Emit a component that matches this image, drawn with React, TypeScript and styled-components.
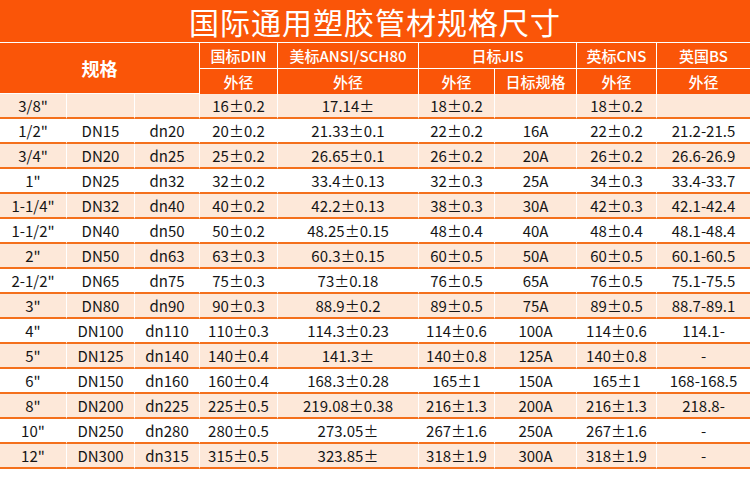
import styled, { createGlobalStyle } from 'styled-components';

const ORANGE = '#fa5508';
const LINE = '#f4701c';
const PEACH = '#fde8d9';

const GlobalStyle = createGlobalStyle`
  * {
    box-sizing: border-box;
  }
  body {
    margin: 0;
    background: #fff;
    font-family: "Noto Sans CJK SC", "Noto Sans", sans-serif;
  }
`;

const Page = styled.div`
  width: 750px;
  height: 482px;
  background: #fff;
  overflow: hidden;
`;

const Title = styled.h1`
  margin: 0;
  height: 43px;
  border-bottom: 1px solid #fff;
  background: ${ORANGE};
  color: #fff;
  font-size: 30px;
  font-weight: 400;
  line-height: 42px;
  letter-spacing: 1px;
  text-align: center;
  white-space: nowrap;
`;

const Table = styled.table`
  width: 750px;
  border-collapse: separate;
  border-spacing: 0;
  table-layout: fixed;
`;

const HeadCell = styled.th<{ $big?: boolean; $last?: boolean }>`
  height: ${(p) => (p.$big ? 51 : 26)}px;
  padding: 0;
  background: ${ORANGE};
  color: #fff;
  font-size: ${(p) => (p.$big ? 18 : 15)}px;
  font-weight: ${(p) => (p.$big ? 700 : 500)};
  text-align: center;
  vertical-align: middle;
  white-space: nowrap;
  border-right: ${(p) => (p.$last ? 'none' : '1px solid #fff')};
  border-bottom: 1px solid #fff;
`;

const SubHeadCell = styled(HeadCell)`
  height: 25px;
  border-bottom: none;
`;

const Row = styled.tr<{ $shaded: boolean }>`
  background: ${(p) => (p.$shaded ? PEACH : '#fff')};
`;

const Cell = styled.td<{ $last?: boolean }>`
  height: 25px;
  padding: 0;
  color: #151515;
  font-size: 15px;
  line-height: 22px;
  text-align: center;
  vertical-align: middle;
  white-space: nowrap;
  border-right: ${(p) => (p.$last ? 'none' : '1px solid #fff')};
  border-bottom: 2px solid ${LINE};
`;

const widths = [67, 68, 65, 78, 141, 76, 82, 80, 93];

const rows: string[][] = [
  ['3/8"', '', '', '16±0.2', '17.14±', '18±0.2', '', '18±0.2', ''],
  ['1/2"', 'DN15', 'dn20', '20±0.2', '21.33±0.1', '22±0.2', '16A', '22±0.2', '21.2-21.5'],
  ['3/4"', 'DN20', 'dn25', '25±0.2', '26.65±0.1', '26±0.2', '20A', '26±0.2', '26.6-26.9'],
  ['1"', 'DN25', 'dn32', '32±0.2', '33.4±0.13', '32±0.3', '25A', '34±0.3', '33.4-33.7'],
  ['1-1/4"', 'DN32', 'dn40', '40±0.2', '42.2±0.13', '38±0.3', '30A', '42±0.3', '42.1-42.4'],
  ['1-1/2"', 'DN40', 'dn50', '50±0.2', '48.25±0.15', '48±0.4', '40A', '48±0.4', '48.1-48.4'],
  ['2"', 'DN50', 'dn63', '63±0.3', '60.3±0.15', '60±0.5', '50A', '60±0.5', '60.1-60.5'],
  ['2-1/2"', 'DN65', 'dn75', '75±0.3', '73±0.18', '76±0.5', '65A', '76±0.5', '75.1-75.5'],
  ['3"', 'DN80', 'dn90', '90±0.3', '88.9±0.2', '89±0.5', '75A', '89±0.5', '88.7-89.1'],
  ['4"', 'DN100', 'dn110', '110±0.3', '114.3±0.23', '114±0.6', '100A', '114±0.6', '114.1-'],
  ['5"', 'DN125', 'dn140', '140±0.4', '141.3±', '140±0.8', '125A', '140±0.8', '-'],
  ['6"', 'DN150', 'dn160', '160±0.4', '168.3±0.28', '165±1', '150A', '165±1', '168-168.5'],
  ['8"', 'DN200', 'dn225', '225±0.5', '219.08±0.38', '216±1.3', '200A', '216±1.3', '218.8-'],
  ['10"', 'DN250', 'dn280', '280±0.5', '273.05±', '267±1.6', '250A', '267±1.6', '-'],
  ['12"', 'DN300', 'dn315', '315±0.5', '323.85±', '318±1.9', '300A', '318±1.9', '-'],
];

const App: React.FC = () => {
  return (
    <Page>
      <GlobalStyle />
      <Title>国际通用塑胶管材规格尺寸</Title>
      <Table>
        <colgroup>
          {widths.map((w, i) => (
            <col key={i} style={{ width: w }} />
          ))}
        </colgroup>
        <thead>
          <tr>
            <HeadCell $big colSpan={3} rowSpan={2}>
              规格
            </HeadCell>
            <HeadCell>国标DIN</HeadCell>
            <HeadCell>美标ANSI/SCH80</HeadCell>
            <HeadCell colSpan={2}>日标JIS</HeadCell>
            <HeadCell>英标CNS</HeadCell>
            <HeadCell $last>英国BS</HeadCell>
          </tr>
          <tr>
            <SubHeadCell>外径</SubHeadCell>
            <SubHeadCell>外径</SubHeadCell>
            <SubHeadCell>外径</SubHeadCell>
            <SubHeadCell>日标规格</SubHeadCell>
            <SubHeadCell>外径</SubHeadCell>
            <SubHeadCell $last>外径</SubHeadCell>
          </tr>
        </thead>
        <tbody>
          {rows.map((row, r) => (
            <Row key={r} $shaded={r % 2 === 0}>
              {row.map((value, c) => (
                <Cell key={c} $last={c === row.length - 1}>
                  {value}
                </Cell>
              ))}
            </Row>
          ))}
        </tbody>
      </Table>
    </Page>
  );
};

export default App;
